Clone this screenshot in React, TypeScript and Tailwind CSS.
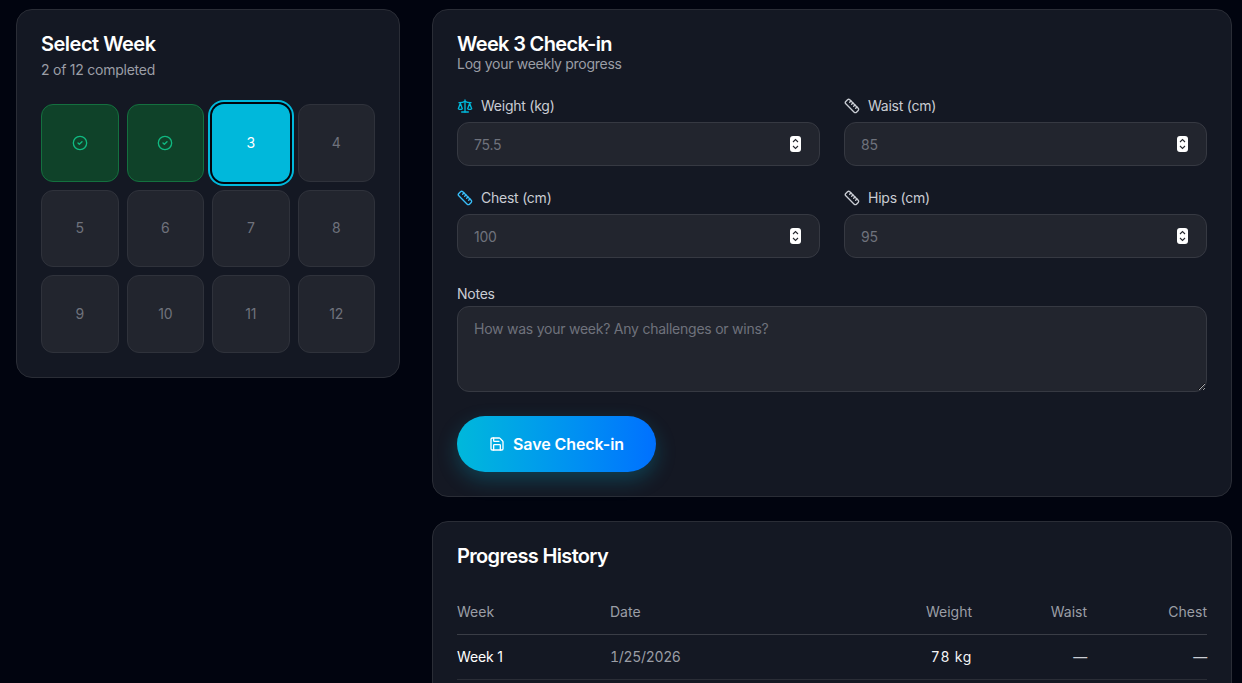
import { CircleCheck, Ruler, Save, Scale } from 'lucide-react';

const weeks = [1, 2, 3, 4, 5, 6, 7, 8, 9, 10, 11, 12];

const fields = [
  { label: 'Weight (kg)', placeholder: '75.5', icon: Scale, color: 'text-[#00b8db]' },
  { label: 'Waist (cm)', placeholder: '85', icon: Ruler, color: 'text-[#c9ccd3]' },
  { label: 'Chest (cm)', placeholder: '100', icon: Ruler, color: 'text-[#38bdf8]' },
  { label: 'Hips (cm)', placeholder: '95', icon: Ruler, color: 'text-[#c9ccd3]' },
];

const history = [{ week: 'Week 1', date: '1/25/2026', weight: '78 kg', waist: '—', chest: '—' }];

function WeekButton({ week }: { week: number }) {
  if (week < 3) {
    return (
      <button className="aspect-square rounded-xl bg-[#0f4229] border border-[#14703f] flex items-center justify-center">
        <CircleCheck className="w-4 h-4 text-[#10b981]" />
      </button>
    );
  }
  if (week === 3) {
    return (
      <button className="aspect-square rounded-xl bg-[#00b8db] text-white text-sm ring-2 ring-[#00b8db] ring-offset-2 ring-offset-[#02040c] flex items-center justify-center">
        3
      </button>
    );
  }
  return (
    <button className="aspect-square rounded-xl bg-[#22252e] border border-[#2f323b] text-[#6f727c] text-sm flex items-center justify-center">
      {week}
    </button>
  );
}

// the stepper the number inputs show in the picture
function Spinner() {
  return (
    <div className="absolute right-[19px] top-[14px] w-[11px] h-[16px] rounded-[3px] bg-white flex flex-col items-center justify-center gap-[2px] pointer-events-none">
      <svg width="7" height="5" viewBox="0 0 7 5" fill="none" stroke="#26282f" strokeWidth="1.1">
        <path d="M1 4 3.5 1.5 6 4" />
      </svg>
      <svg width="7" height="5" viewBox="0 0 7 5" fill="none" stroke="#26282f" strokeWidth="1.1">
        <path d="M1 1 3.5 3.5 6 1" />
      </svg>
    </div>
  );
}

export default function App() {
  return (
    <div className="h-screen overflow-hidden bg-[#01040f] px-4 pt-[9px] tracking-[-0.015em] font-['Inter',sans-serif]">
      <div className="grid grid-cols-[384px_800px] gap-8 items-start">
        <div className="rounded-2xl border border-[#2a2d36] bg-[#141823] p-6">
          <h2 className="text-xl leading-5 font-semibold tracking-[-0.025em] text-white">Select Week</h2>
          <p className="text-sm leading-5 mt-[6px] mb-6 text-[#9b9ea6]">2 of 12 completed</p>
          <div className="grid grid-cols-4 gap-2">
            {weeks.map((w) => (
              <WeekButton key={w} week={w} />
            ))}
          </div>
        </div>

        <div className="flex flex-col gap-6">
          <div className="rounded-2xl border border-[#2a2d36] bg-[#141823] p-6">
            <h2 className="text-xl leading-5 font-semibold tracking-[-0.033em] text-white">Week 3 Check-in</h2>
            <p className="text-sm leading-5 tracking-[-0.02em] text-[#9b9ea6]">Log your weekly progress</p>

            <div className="grid grid-cols-2 gap-x-6 gap-y-[22px] mt-[22px]">
              {fields.map((f) => (
                <div key={f.label}>
                  <label className="flex items-center gap-2 text-sm leading-5 text-[#c9ccd3] mb-[6px]">
                    <f.icon className={`w-4 h-4 ${f.color}`} />
                    {f.label}
                  </label>
                  <div className="relative">
                    <input
                      type="number"
                      placeholder={f.placeholder}
                      className="w-full h-11 rounded-xl border border-[#363942] bg-[#22252e] px-4 text-sm text-white placeholder:text-[#6f727c] outline-none [appearance:textfield] [&::-webkit-inner-spin-button]:appearance-none"
                    />
                    <Spinner />
                  </div>
                </div>
              ))}
            </div>

            <div className="mt-[26px]">
              <label className="block text-sm leading-5 text-[#c9ccd3] mb-[2px]">Notes</label>
              <textarea
                rows={3}
                placeholder="How was your week? Any challenges or wins?"
                className="block w-full h-[86px] rounded-xl border border-[#363942] bg-[#22252e] px-4 py-3 text-sm text-white placeholder:text-[#6f727c] outline-none"
              />
            </div>

            <button className="mt-6 h-14 w-[199px] rounded-full bg-gradient-to-r from-[#00b8db] to-[#0070ff] shadow-[0_8px_20px_rgba(0,184,219,0.25)] flex items-center justify-center gap-2 text-white text-base font-semibold tracking-[-0.005em]">
              <Save className="w-4 h-4" />
              Save Check-in
            </button>
          </div>

          <div className="rounded-2xl border border-[#2a2d36] bg-[#141823] p-6">
            <h2 className="text-xl leading-5 font-semibold tracking-[-0.033em] text-white mb-6">Progress History</h2>
            <table className="w-full text-sm">
              <thead>
                <tr className="border-b border-[#3a3d46] text-[#9b9ea6] tracking-normal">
                  <th className="py-3 text-left font-normal w-[153px]">Week</th>
                  <th className="py-3 text-left font-normal">Date</th>
                  <th className="py-3 text-right font-normal">Weight</th>
                  <th className="py-3 text-right font-normal w-[115px]">Waist</th>
                  <th className="py-3 text-right font-normal w-[120px]">Chest</th>
                </tr>
              </thead>
              <tbody>
                {history.map((row) => (
                  <tr key={row.week} className="border-b border-[#2a2d36]">
                    <td className="py-3 tracking-[-0.01em] text-white">{row.week}</td>
                    <td className="py-3 tabular-nums tracking-[-0.024em] text-[#9b9ea6]">{row.date}</td>
                    <td className="py-3 text-right tabular-nums tracking-[0.05em] text-[#f3f4f6]">{row.weight}</td>
                    <td className="py-3 text-right text-[#c9ccd3]">{row.waist}</td>
                    <td className="py-3 text-right text-[#c9ccd3]">{row.chest}</td>
                  </tr>
                ))}
              </tbody>
            </table>
          </div>
        </div>
      </div>
    </div>
  );
}
